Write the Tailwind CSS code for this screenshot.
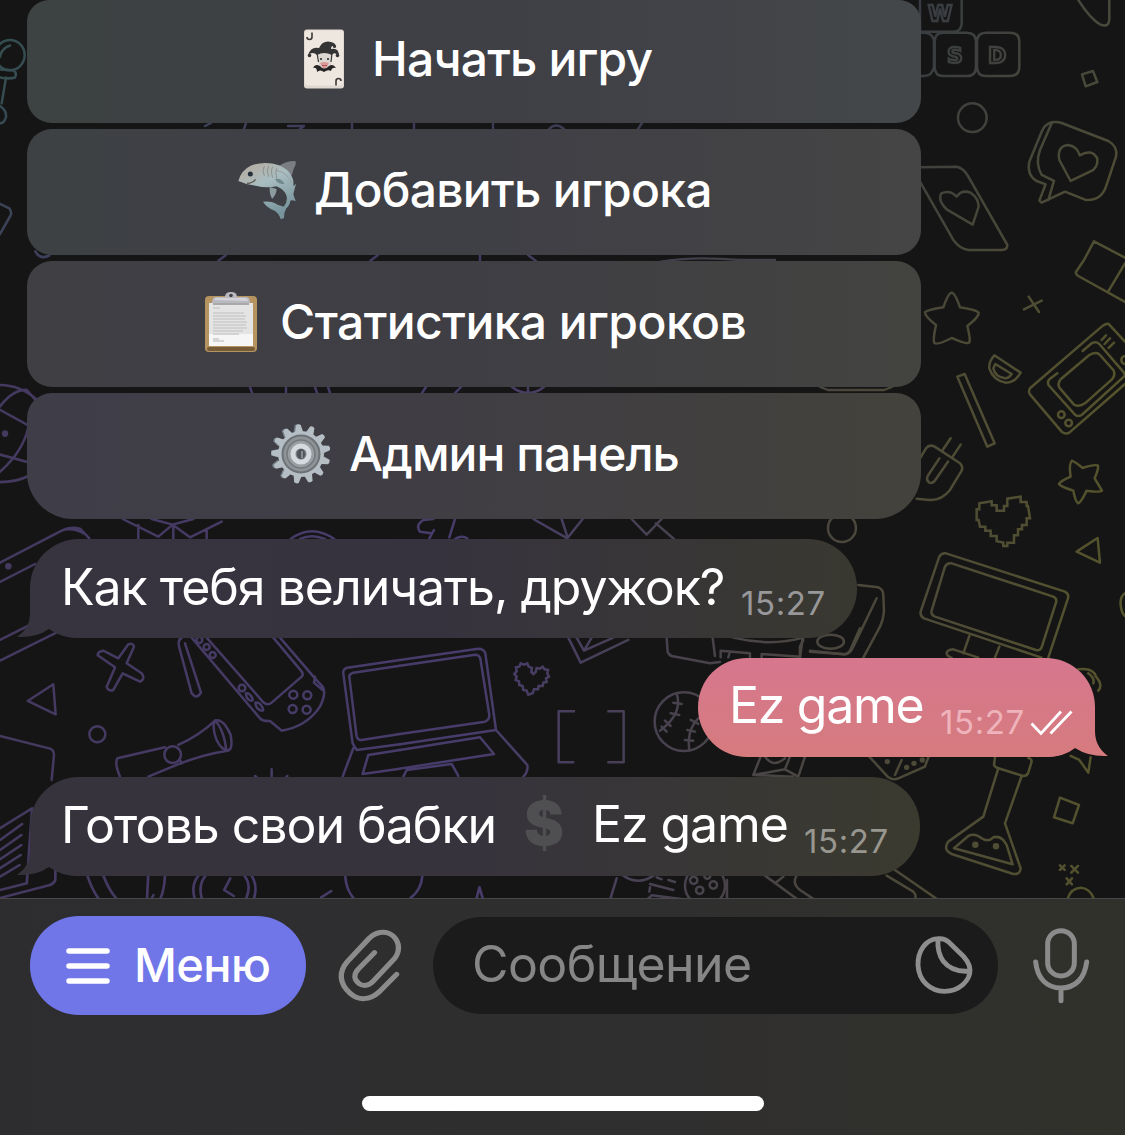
<!DOCTYPE html>
<html lang="ru">
<head>
<meta charset="utf-8">
<title>Чат</title>
<script src="https://cdn.jsdelivr.net/npm/@tailwindcss/browser@4"></script>
</head>
<body class="bg-[#151515]">
<div class="relative w-[1125px] h-[1135px] overflow-hidden flex flex-col font-['Inter','Liberation_Sans',sans-serif] text-white whitespace-nowrap">

  <!-- Doodle wallpaper: outlines mask a multi-colour gradient -->
  <svg class="absolute left-0 top-0" width="1125" height="898" viewBox="0 0 1125 898">
    <defs>
      <linearGradient id="gx" x1="0" x2="1"><stop offset="0" stop-color="#44395f"/><stop offset=".42" stop-color="#483c6c"/><stop offset=".62" stop-color="#48424b"/><stop offset=".78" stop-color="#4b483a"/><stop offset="1" stop-color="#55542b"/></linearGradient>
      <linearGradient id="gt" x1="0" x2="1"><stop offset="0" stop-color="#33504f"/><stop offset=".3" stop-color="#3d3b58"/><stop offset=".8" stop-color="#363a42"/><stop offset="1" stop-color="#4a4a3c"/></linearGradient>
      <linearGradient id="fade" x1="0" y1="0" x2="0" y2="1"><stop offset="0" stop-color="#fff"/><stop offset=".1" stop-color="#fff" stop-opacity=".85"/><stop offset=".42" stop-color="#fff" stop-opacity="0"/></linearGradient>
      <mask id="fm"><rect width="1125" height="898" fill="url(#fade)"/></mask>
      <mask id="doodles">
        <g fill="none" stroke="#fff" stroke-linecap="round" stroke-linejoin="round" stroke-width="7.500">
          <g transform="translate(900 0) scale(.3333)">
            <path d="M60 95H160Q185 95 185 70V0M60 0V95M50 98H75Q100 100 102 125V200Q98 228 70 228H50M130 98H200Q228 98 228 125V200Q228 228 200 228H130Q104 228 104 200V125Q104 98 130 98ZM258 98H330Q358 98 358 125V200Q358 228 330 228H258Q231 228 231 200V125Q231 98 258 98Z"/>
            <circle cx="217" cy="353" r="43"/>
            <path d="M535 0Q570 55 600 73Q628 85 628 55V0M546 223 579 213 592 246 557 259Z"/>
            <path d="M455 367Q470 364 485 369L625 423Q655 440 648 470L618 560Q602 605 555 599L495 575 425 608 418 602 437 553 410 543Q380 525 388 485L425 395Q434 373 455 367ZM455 370 420 450Q405 490 425 525L462 543 445 600"/>
            <path d="M512 543 478 480Q470 440 503 435Q532 438 539 466Q575 445 592 475Q595 505 570 515Z"/>
            <path d="M60 502 170 500Q190 503 205 530L322 735Q322 750 305 750L205 750Q180 747 160 720L60 545"/>
            <path d="M218 674 140 628Q112 600 124 580Q150 568 170 590Q185 568 212 578Q236 595 236 620Z"/>
          </g>
          <g transform="translate(900 260) scale(.3333)">
            <path d="M552 0 528 36Q526 42 535 48L675 126M582-56 552 0M582-56 675-7M675 10 625 94"/>
            <path d="M155 98Q165 98 180 142Q230 150 236 158Q238 170 202 198Q212 238 208 247Q200 255 155 234Q112 256 103 249Q98 240 108 195Q74 168 75 157Q80 150 130 142Q145 98 155 98Z"/>
            <path d="M372 148 425 122M386 110 417 156M283 286 362 338Q345 368 318 368Q280 362 268 325Q266 305 283 286ZM286 312 335 342Q325 357 312 354Q285 350 280 325ZM172 350 194 342 284 550 262 560Z"/>
            <path d="M675 245 625 191Q617 190 605 200L390 385Q384 395 390 403L485 515Q497 524 508 518L675 372M548 273 575 250Q588 243 598 252L672 338 675 347 545 465Q535 472 525 464L448 378Q440 368 448 358L472 340M568 285Q590 273 600 285L640 330Q648 345 636 358L555 430Q538 442 522 434L480 385Q470 372 482 358ZM605 240 618 226M614 252 630 235M626 264 642 248"/>
            <circle cx="484" cy="464" r="10"/><circle cx="506" cy="489" r="10"/><circle cx="676" cy="300" r="12"/>
            <path d="M60 595 78 565Q88 552 104 560L180 610Q190 620 185 632L150 690Q125 722 88 720L50 716M128 570 152 535M158 590 182 554M118 595 85 645Q76 660 88 668Q98 672 106 660L144 605"/>
            <path d="M516 602Q525 605 548 624Q585 612 594 617Q596 627 584 655L606 692Q600 698 560 692Q542 730 534 730Q526 724 520 692Q482 680 477 672Q480 664 512 650Q506 612 516 602Z"/>
            <path stroke-linejoin="miter" d="M230 748H238V730L275 724V736H290V752H312V738H322V716L362 710V726H380V738H384L390 775H380V795H366V808H354V826H342V848H322V858H310V848L290 844V828H272V812H256V800H240L236 780H230Z"/>
          </g>
          <g transform="translate(0 500) scale(.3333)">
            <path d="M0 188 185 92Q210 78 240 86L268 115M185 92Q215 80 252 100M0 246 105 192M0 420 90 375M0 482 175 395"/><circle cx="25" cy="199" r="6" fill="#fff"/>
            <path d="M368 57 475 110 518 74 570 112 665 65M455 57 518 74 580 57M415 75V117M520 80V117M620 90V117M872 117Q935 70 1003 117M900 117Q935 100 975 117"/>
            <path d="M83 603 160 553 167 643Z"/><circle cx="292" cy="703" r="24"/>
            <path d="M342 510 320 560Q325 575 340 570L368 520 420 545Q438 535 425 520L380 490 402 440Q400 428 385 433L355 475 310 452Q292 455 293 466L345 502Z"/>
            <path d="M545 414Q530 420 540 450L575 580Q590 600 603 578L555 430M575 413 780 655Q790 665 810 663L845 692Q920 680 960 620Q980 580 968 560L945 535 840 413M620 413 790 607Q803 618 815 608L905 530Q912 522 903 512L820 413M945 530 942 548 968 570"/>
            <circle cx="620" cy="441" r="9"/><circle cx="638" cy="465" r="9"/><circle cx="598" cy="420" r="9"/><circle cx="726" cy="564" r="10"/><path d="M738 580Q748 578 756 592Q762 604 752 602Q738 598 738 580ZM766 608Q778 606 786 620Q794 634 784 632Q768 628 766 608Z"/>
            <circle cx="880" cy="584" r="12"/><circle cx="922" cy="586" r="12"/><circle cx="878" cy="627" r="12"/><circle cx="920" cy="629" r="12"/>
            <path d="M360 830Q343 790 352 775L495 742M535 735Q600 705 645 662Q670 655 692 705Q700 750 682 752Q600 765 530 795L445 830M645 662Q635 680 650 720Q665 752 685 750M645 662Q665 680 675 725L678 745"/><circle cx="518" cy="764" r="25"/><path d="M540 780 545 790M815 808V830M765 828 770 832M862 828 858 832"/>
            <path d="M0 708 150 746Q162 750 162 765L155 840"/>
            <path d="M1030 520Q1028 508 1042 503L1200 480M1030 520 1058 730 1070 750 1200 733M1060 745 1028 830M1048 530Q1048 522 1060 518L1200 497M1048 530 1070 710Q1075 722 1085 720L1200 702M1105 765 1200 750M1105 765 1088 822 1200 806"/>
          </g>
          <g transform="translate(400 500) scale(.3333)">
            <path d="M100 57 70 60Q45 75 60 95L95 100M102 90 88 115M165 57 148 112M165 117Q185 105 202 115M400 57 502 115 548 57M485 57 502 110M695 57 740 104 785 57M768 70 822 117"/>
            <circle cx="1326" cy="84" r="42"/>
            <path d="M0 480 235 446Q252 446 256 460L288 690 382 795Q385 815 370 830M0 497 225 464Q238 464 241 476L268 645Q268 660 255 665L0 702M0 733 288 690M0 750 240 712 282 762 0 806M10 830 20 810 155 792 175 828"/>
            <path stroke-linejoin="miter" d="M385 584 380 572 370 570 368 558 358 555 357 544 347 540 350 530 343 522 350 514 348 502 358 500 362 490 372 494 382 490 386 500 396 504 394 516 400 522 407 516 410 504 420 506 428 500 434 508 444 510 442 520 447 530 438 535 440 546 430 548 428 558 416 558 414 568 402 568 398 580Z"/>
            <path stroke-linecap="butt" d="M525 634H476V787H523M622 634H671V787H622"/>
            <path d="M505 413 542 488 685 420M530 413 552 452 640 413M552 452 575 413M800 413 803 455Q806 465 815 468L930 490 960 486M938 413 945 468M962 472V452L1050 460V472M985 472 988 462M1085 472V462L1200 470V440L1210 420M1000 413Q1110 440 1210 413M1230 455 1335 463Q1345 462 1350 452L1380 385"/>
            <ellipse cx="1292" cy="425" rx="40" ry="21"/>
            <circle cx="852" cy="665" r="88"/><path d="M830 580Q850 640 780 692M820 608 845 612M812 640 838 645M795 662 812 678M785 680 800 695M895 655Q860 690 868 750M872 660 895 672M862 690 885 695M855 720 880 722"/>
            <path d="M1082 770 1060 825 1155 808 1195 830 1215 770M1155 808 1170 770M1095 770Q1120 805 1155 775M1060 825 1180 830"/>
          </g>
          <g transform="translate(680 530) scale(.3333)">
            <path d="M535 165 595 172Q610 178 610 195L612 245Q610 270 600 290L550 383M590 205 520 350Q510 375 490 373L390 362M360 383 368 325"/>
            <path d="M798 70 1155 185Q1168 192 1164 205L1105 383M798 70Q785 68 778 80L722 245Q720 258 732 265L1085 383M815 100 1120 200Q1132 206 1128 218L1085 352Q1080 364 1068 360L765 260Q752 254 755 242L795 110Q802 98 815 100ZM868 318 850 370M958 350 945 383M895 383 820 358Q800 360 800 370Q802 380 815 383"/>
            <path d="M1190 65 1253 24 1260 98ZM1335 190Q1320 200 1322 225Q1325 250 1335 258M1195 418Q1240 412 1248 440Q1270 465 1255 482M1225 430Q1245 445 1240 460"/>
            <path d="M568 680 625 742Q640 752 655 745L735 710 745 682M665 690 645 735"/><g fill="#fff" stroke="none"><circle cx="622" cy="695" r="8"/><circle cx="680" cy="712" r="8"/><circle cx="702" cy="700" r="8"/><circle cx="727" cy="690" r="8"/></g>
            <path d="M945 682 942 705Q945 712 955 715L1030 738Q1042 738 1045 728L1055 695Q1055 686 1045 684M955 715 910 860 805 935Q795 948 800 960Q805 968 815 972L1000 1032Q1020 1035 1022 1015L975 880 1025 738M822 955 865 918Q885 908 905 925Q925 938 940 922Q965 915 980 945L998 1003Z"/><circle cx="886" cy="944" r="6" fill="#fff"/><circle cx="948" cy="949" r="6" fill="#fff"/>
            <path d="M1172 678 1198 690 1225 728 1232 682M1140 803 1197 825 1178 880 1122 862ZM1140 1006 1154 1020M1154 1006 1140 1020M1174 1008 1194 1028M1194 1008 1174 1028M1160 1045 1176 1063M1176 1045 1160 1063"/><path d="M1162 1110Q1170 1075 1203 1073Q1235 1078 1242 1110"/>
            <path d="M620 1037 700 1085Q710 1095 705 1110M645 1020 775 1110M255 1037 355 1110M285 1060 310 1040M350 1037Q335 1060 360 1080L405 1110"/>
            <circle cx="75" cy="1067" r="60"/><circle cx="41" cy="1051" r="11"/><circle cx="100" cy="1065" r="11"/><circle cx="59" cy="1081" r="11"/><circle cx="82" cy="1037" r="9"/><path d="M141 1110V1050M-170 1037Q-125 1068 -80 1037M-190 1045-210 1110M-70 1042-55 1048M-35 1050-15 1056M-90 1062-20 1080M-92 1085-90 1072M-100 1110-85 1096 10 1108"/>
          </g>
          <g transform="translate(0 760) scale(.357 .3333)">
            <path d="M0 205 90 145M0 240 62 192M0 270 60 225M0 298 60 255M0 325 58 285M0 350 55 315M90 145 75 370 0 390M155 330V360Q150 372 140 375L0 414M245 348Q258 390 275 414M290 348Q305 390 325 414M415 348 412 414M462 348Q460 390 450 414M425 414 430 405M545 414Q535 375 555 348M565 414Q555 375 575 348M690 414Q705 375 685 348M712 414Q722 375 705 348M645 355 628 390 655 408M900 412 928 393M967 348Q970 390 990 414M1183 348Q1180 390 1150 414M1335 414 1343 382 1352 414"/>
          </g>
          <g transform="scale(.3333 .3444)">
            <circle cx="30" cy="160" r="44"/><path d="M0 165Q5 140 30 132M0 202 40 204Q52 212 45 225Q30 230 0 225M18 225 5 300M0 308Q20 320 18 340Q12 358 0 358M0 592 28 605Q36 615 32 625L0 680M106 730Q120 755 148 742M0 1118Q60 1118 110 1160M0 1400Q50 1400 90 1380M0 1180Q40 1130 80 1132L105 1160M0 1190 85 1235M0 1370Q70 1310 85 1240M0 1320 85 1342"/><circle cx="15" cy="1259" r="6" fill="#fff"/>
          </g>
          <path stroke-width="2.400" d="M205 126 211 123M246 123 244 129M288 126 304 126 300 129M352 123V129M414 123V129M493 123V129M549 129Q556 122 564 129M638 129 642 123M250 387 252 393M286 387V393M315 387 317 393M328 387 330 393M422 393 426 387M455 393 461 387M512 387Q528 399 544 387M528 387V393M820 387 828 390H884L892 387M660 262Q690 256 740 260H775M218 261 226 255M370 261 378 255M480 261V255M528 255 536 261"/>
        </g>
        <g fill="none" stroke="#fff" stroke-width="2.300" font-family="DejaVu Sans" font-weight="bold" font-size="22"><text x="928" y="21">W</text><text x="947" y="63">S</text><text x="988" y="63">D</text></g>
      </mask>
    </defs>
    <g mask="url(#doodles)"><rect width="1125" height="898" fill="url(#gx)"/><rect width="1125" height="898" fill="url(#gt)" mask="url(#fm)"/></g>
  </svg>

  <!-- Conversation -->
  <main class="relative h-[898px] flex-none flex flex-col">
    <div class="ml-[27px] w-[894px] flex flex-col gap-[6px] text-[48px] font-medium leading-none">
      <div class="h-[123px] rounded-b-[25px] rounded-t-[22px] bg-linear-to-r from-[#3d4242] via-[#3f3f46] to-[#444749] flex items-center pl-[277px] pb-[5px]">
        <svg class="mr-[28px] flex-none" width="40" height="60" viewBox="0 0 40 60">
          <rect y=".5" width="40" height="59" rx="3" fill="#e0d8d0"/><rect x="1" y="1.5" width="38" height="55" rx="3" fill="#eee7df"/>
          <path d="M8 3.500V8Q8 10.500 5.500 10.500Q3 10.500 3 8M32 56.500V52Q32 49.500 34.500 49.500Q37 49.500 37 52" fill="none" stroke="#3c3838" stroke-width="1.600"/>
          <path d="M13 24H28L27 36Q21 44 15 36Z" fill="#dcd7d3"/><path d="M16 34Q20 32 25 34L23 38Q20 41 18 38Z" fill="#dc9a96"/><path d="M18 36.500H23" stroke="#b05660"/>
          <path d="M4 26Q7 17 15 19Q19 11 27 13Q32 14 32 18Q27 15 27 20Q35 18 35 27Q30 22 28 26Q20 22 13 26Q9 22 4 26Z" fill="#353435"/><path d="M13 24 14.500 33M28 24 27 33" stroke="#353435" stroke-width="1.200"/><circle cx="5.500" cy="26.500" r="1.800" fill="#353435"/><circle cx="33.500" cy="26.500" r="1.800" fill="#353435"/><circle cx="30.500" cy="17.500" r="1.600" fill="#353435"/>
          <path d="M9 39Q11 34 16 37Q20 42 25 37Q29 34 32 39Q28 38 27 42Q24 40 20 43Q16 40 13 43Q13 38 9 39Z" fill="#252526"/><path d="M17 29V31M24 29V31" stroke="#222" stroke-width="1.500"/>
        </svg>
        <span class="tracking-[-0.8px] mb-[1px]">Начать игру</span>
      </div>
      <div class="h-[126px] rounded-[25px] bg-linear-to-r from-[#3e4144] via-[#3f3f46] to-[#454545] flex items-center pl-[211px] pb-[4px]">
        <svg class="mr-[15px] flex-none" width="61" height="60" viewBox="39 29 183 180">
          <defs><linearGradient id="sh" x1="0" y1="0" x2=".5" y2="1"><stop offset=".2" stop-color="#b3b2aa"/><stop offset=".45" stop-color="#a8bdc1"/><stop offset="1" stop-color="#77949c"/></linearGradient></defs>
          <path d="M162 47Q184 31 211 32Q215 42 207 53L200 76Z" fill="#7a7d82"/>
          <path d="M134 110Q133 134 142 145Q154 132 155 116Z" fill="#8b9ba0"/>
          <path d="M40 92Q48 60 77 46Q120 30 162 45Q190 56 200 78Q207 89 205 108L213 100Q208 118 205 132L212 153Q202 148 196 151Q195 164 184 174Q177 185 177 203L167 207Q163 190 149 181Q126 173 114 154Q139 151 158 163L176 169Q188 156 185 138Q178 116 154 108Q125 114 92 106Q63 103 40 92Z" fill="url(#sh)"/>
          <path d="M155 60Q190 68 200 100" fill="none" stroke="#9aa0a0" stroke-width="3"/>
          <path d="M66 99Q83 98 92 87" fill="none" stroke="#5e5552" stroke-width="4"/>
          <path d="M118 48Q110 60 118 76M131 47Q123 60 131 79M143 49Q136 62 143 82M155 54Q150 66 155 84" fill="none" stroke="#8d918c" stroke-width="3"/>
          <path d="M150 86Q168 82 178 100Q160 104 150 86Z" fill="#72898b"/><circle cx="76" cy="71" r="7.500" fill="#24303b"/>
        </svg>
        <span class="tracking-[-0.7px]">Добавить игрока</span>
      </div>
      <div class="h-[126px] rounded-[25px] bg-linear-to-r from-[#3f3f44] via-[#3f3e44] to-[#434340] flex items-center pl-[178px] pb-[4px]">
        <svg class="mr-[23px] flex-none" width="52" height="60" viewBox="0 0 52 60">
          <rect y="4" width="52" height="56" rx="4" fill="#b59460"/><rect x="2" y="55" width="48" height="4" rx="2" fill="#755b38"/><path d="M4 11H48V54H4Z" fill="#e4e4e4"/><path d="M4 42H48V54H4Z" fill="#f6f6f6"/>
          <path d="M8 16H15M8 21H39M8 24H41M8 27H40M8 30H42M8 33H41M8 36H42M8 39H38M8 42H34M8 47H14M8 49H19" stroke="#cacacc" stroke-width="1.500"/>
          <path d="M7 11Q7 4 12 5H20Q20 0 26 0Q32 0 32 5H40Q45 4 45 11Z" fill="#b9b9c0"/><path d="M9 8Q10 5 13 6H39Q43 6 43 9Z" fill="#d2d2d7"/><circle cx="26" cy="3.500" r="1.800" fill="#424148"/><path d="M8 12H44" stroke="#6e6e72"/>
        </svg>
        <span class="tracking-[-0.55px]">Статистика игроков</span>
      </div>
      <div class="h-[126px] rounded-t-[25px] rounded-b-[46px] bg-linear-to-r from-[#3f3d48] via-[#403e43] to-[#43423c] flex items-center pl-[244px] pb-[4px]">
        <svg class="mr-[18px] flex-none" width="60" height="60" viewBox="-30 -30 60 60">
          <defs><path id="tooth" d="M-4-22-2.300-29Q0-30.500 2.300-29L4-22Z"/></defs>
          <g fill="#77828a" transform="translate(-1.500 0)"><use href="#tooth" transform="rotate(-5)"/><use href="#tooth" transform="rotate(-33)"/><use href="#tooth" transform="rotate(-60)"/><use href="#tooth" transform="rotate(-88)"/><use href="#tooth" transform="rotate(-115)"/><use href="#tooth" transform="rotate(-143)"/></g>
          <g fill="#b6bec5"><use href="#tooth" transform="rotate(-5)"/><use href="#tooth" transform="rotate(23)"/><use href="#tooth" transform="rotate(51)"/><use href="#tooth" transform="rotate(78)"/><use href="#tooth" transform="rotate(106)"/><use href="#tooth" transform="rotate(134)"/><use href="#tooth" transform="rotate(161)"/><use href="#tooth" transform="rotate(189)"/><use href="#tooth" transform="rotate(217)"/><use href="#tooth" transform="rotate(244)"/><use href="#tooth" transform="rotate(272)"/><use href="#tooth" transform="rotate(300)"/><use href="#tooth" transform="rotate(327)"/><circle r="23"/></g>
          <circle r="18.500" fill="#8d9397" stroke="#6d7276" stroke-width="2"/><circle r="14" fill="#989ea2" stroke="#74797d" stroke-width="1.500"/><circle r="8" fill="#777d82" stroke="#d4dade" stroke-width="5"/><ellipse rx="4" ry="5" fill="#50545a"/><path d="M1-3V4" stroke="#9ba1a6" stroke-width="1.500"/>
        </svg>
        <span class="tracking-[-0.95px]">Админ панель</span>
      </div>
    </div>

    <!-- Incoming -->
    <div class="relative mt-[20px] ml-[30px] w-[827px] h-[99px] rounded-[49px] bg-linear-to-r from-[#37333f] via-[#37333e] via-50% to-[#393830] flex items-center pl-[31px] text-[50px] leading-none">
      <svg class="absolute -left-[13px] bottom-0" width="62" height="60" viewBox="0 0 62 60"><path d="M13 10V36Q13 50 0 59Q19 60 32 51Q44 60 62 60V0H20Z" fill="#37333f"/></svg>
      <span class="relative pb-[4px] tracking-[-1.03px]">Как тебя величать, дружок?</span>
      <span class="absolute left-[711px] top-[48px] text-[33px] tracking-[0.6px] text-[#98979a]">15:27</span>
    </div>
    <!-- Outgoing -->
    <div class="relative mt-[20px] ml-[698px] w-[397px] h-[99px] rounded-[49px] bg-linear-to-b from-[#d6778e] to-[#d67b7e] flex items-center pl-[31px] text-[50px] leading-none">
      <svg class="absolute -right-[13px] bottom-0" width="62" height="50" viewBox="0 0 62 50"><defs><linearGradient id="tail" x1="0" y1="0" x2="0" y2="1"><stop stop-color="#d67986"/><stop offset="1" stop-color="#d67b7e"/></linearGradient></defs><path d="M49 0V24Q49 40 62 49Q43 50 29 41Q18 50 0 50V0Z" fill="url(#tail)"/></svg>
      <span class="relative pb-[5px] tracking-[-1.3px]">Ez game</span>
      <span class="absolute left-[242px] top-[48px] text-[33px] tracking-[0.6px] text-[#eeb3bb]">15:27</span>
      <svg class="absolute left-[332px] top-[52px]" width="44" height="26" viewBox="0 0 44 26" fill="none" stroke="#fff" stroke-width="2.800"><path d="M1.500 13.500 11 23.500 31 1.500M20.500 23.500 41.500 1.500"/></svg>
    </div>
    <!-- Incoming -->
    <div class="relative mt-[20px] ml-[30px] w-[890px] h-[99px] rounded-[49px] bg-linear-to-r from-[#37333d] via-[#37333c] via-50% to-[#3a3a2f] flex items-center pl-[31px] text-[50px] leading-none">
      <svg class="absolute -left-[13px] bottom-0" width="62" height="60" viewBox="0 0 62 60"><path d="M13 10V36Q13 50 0 59Q19 60 32 51Q44 60 62 60V0H20Z" fill="#37333d"/></svg>
      <span class="relative pb-[4px] tracking-[-1px]">Готовь свои бабки</span>
      <span class="absolute left-[494px] top-[16px] text-[60px] font-black text-[#4f4e50]">$</span>
      <span class="absolute left-[562px] top-[22px] tracking-[-1.1px]">Ez game</span>
      <span class="absolute left-[774px] top-[48px] text-[33px] tracking-[0.6px] text-[#97968f]">15:27</span>
    </div>
  </main>

  <!-- Composer -->
  <footer class="relative flex-1 border-t border-[#48484a] bg-linear-to-r from-[#2d2d30] via-[#302f2f] via-60% to-[#30312b] flex flex-col items-center">
    <div class="w-full flex items-center pt-[17px] pl-[30px] leading-none">
      <div class="w-[276px] h-[99px] rounded-[49px] bg-[#7076e8] flex items-center pl-[36px] gap-[24px]">
        <svg class="flex-none" width="44" height="36" viewBox="0 0 44 36" stroke="#fff" stroke-width="5.500" stroke-linecap="round"><path d="M3 3H41M3 18H41M3 33H41"/></svg>
        <span class="text-[47px] font-medium tracking-[-0.6px] pb-[3px]">Меню</span>
      </div>
      <svg class="ml-[31px] flex-none" width="66" height="73" viewBox="943 505 185 219" preserveAspectRatio="none" fill="none" stroke="#8b8b8c" stroke-width="15" stroke-linecap="round" stroke-linejoin="round"><path d="M1110 641 1062 693C1034 720 1004 720 980 698C948 668 948 632 972 603L1034 532C1056 510 1084 510 1101 527C1120 546 1119 574 1104 594L1044 662C1032 676 1016 678 1004 668C990 656 990 640 1002 626L1048 576"/></svg>
      <div class="ml-[30px] w-[565px] h-[97px] rounded-[49px] bg-[#1b1b1b] flex items-center justify-between pl-[39px] pr-[24px]">
        <span class="text-[50px] tracking-[-0.6px] text-[#868686] pb-[3px]">Сообщение</span>
        <svg class="flex-none mb-[2px]" width="60" height="60" viewBox="103 134 180 180" fill="none" stroke="#8e8e8e" stroke-width="14.500" stroke-linejoin="round"><path d="M175 145C136 147 114 184 115 224C117 273 154 303 194 303C240 303 272 270 271 238C270 219 257 202 240 187L207 155Q194 143 175 145ZM175 145Q172 187 191 213Q218 247 270 242"/></svg>
      </div>
      <svg class="ml-[33px] mb-[2px] flex-none" width="60" height="78" viewBox="453 108 180 234" fill="none" stroke="#8b8b8b" stroke-width="15" stroke-linecap="round"><rect x="503" y="122" width="80" height="136" rx="40"/><path d="M467 216C472 265 500 294 543 294S614 265 620 216M543 296V332"/></svg>
    </div>
    <div class="mt-[81px] w-[402px] h-[15px] rounded-full bg-white"></div>
  </footer>
</div>
</body>
</html>
